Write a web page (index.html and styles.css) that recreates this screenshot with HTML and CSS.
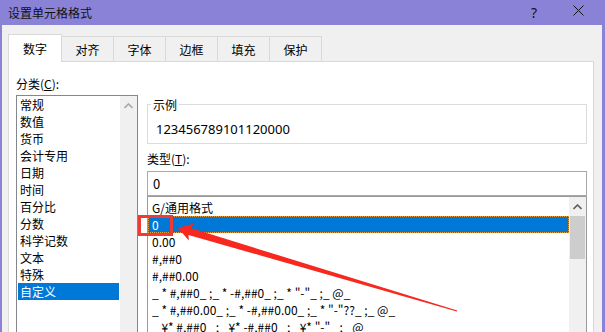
FILE: index.html
```html
<!DOCTYPE html>
<html lang="zh-CN">
<head>
    <meta charset="UTF-8">
    <title>设置单元格格式</title>
    <link rel="stylesheet" href="styles.css">
</head>
<body>
    <div class="dialog">
        <div class="titlebar">
            <span class="title">设置单元格格式</span>
            <span class="help">?</span>
            <span class="close">
                <svg width="11" height="11" viewBox="0 0 11 11"><path d="M0.5 0.5 L10.5 10.5 M10.5 0.5 L0.5 10.5" stroke="#111" stroke-width="1" fill="none"/></svg>
            </span>
        </div>
        <div class="content">
            <div class="tabs">
                <div class="tab active">数字</div>
                <div class="tab">对齐</div>
                <div class="tab">字体</div>
                <div class="tab">边框</div>
                <div class="tab">填充</div>
                <div class="tab">保护</div>
            </div>
            <div class="panel">
                <div class="col_left">
                    <div class="label">分类(<u>C</u>):</div>
                    <div class="listbox cat_list">
                        <ul class="items">
                            <li>常规</li>
                            <li>数值</li>
                            <li>货币</li>
                            <li>会计专用</li>
                            <li>日期</li>
                            <li>时间</li>
                            <li>百分比</li>
                            <li>分数</li>
                            <li>科学记数</li>
                            <li>文本</li>
                            <li>特殊</li>
                            <li class="selected">自定义</li>
                        </ul>
                        <div class="scrollbar">
                            <div class="scroll_btn">
                                <svg width="9" height="6" viewBox="0 0 9 6"><polyline points="0.5,5 4.5,1 8.5,5" stroke="#a8a8a8" stroke-width="1.6" fill="none"/></svg>
                            </div>
                        </div>
                    </div>
                </div>
                <div class="col_right">
                    <fieldset class="sample">
                        <legend>示例</legend>
                        <div class="sample_value">123456789101120000</div>
                    </fieldset>
                    <div class="label type_label">类型(<u>T</u>):</div>
                    <div class="type_input">0</div>
                    <div class="listbox fmt_list">
                        <ul class="items">
                            <li>G/通用格式</li>
                            <li class="selected focus">0</li>
                            <li>0.00</li>
                            <li>#,##0</li>
                            <li>#,##0.00</li>
                            <li>_ * #,##0_ ;_ * -#,##0_ ;_ * "-"_ ;_ @_</li>
                            <li>_ * #,##0.00_ ;_ * -#,##0.00_ ;_ * "-"??_ ;_ @_</li>
                            <li>_ ¥* #,##0_ ;_ ¥* -#,##0_ ;_ ¥* "-"_ ;_ @_</li>
                        </ul>
                        <div class="scrollbar">
                            <div class="scroll_btn">
                                <svg width="9" height="6" viewBox="0 0 9 6"><polyline points="0.5,5 4.5,1 8.5,5" stroke="#606060" stroke-width="1.6" fill="none"/></svg>
                            </div>
                            <div class="thumb"></div>
                        </div>
                    </div>
                </div>
            </div>
        </div>
    </div>
    <svg class="annotation" width="605" height="332" viewBox="0 0 605 332">
        <rect x="139.5" y="216.5" width="32" height="18" fill="none" stroke="#ef3b36" stroke-width="3"/>
        <polygon points="178,228 194,223.4 190.5,228.1 457.2,310.4 456.8,311.6 188.5,234.9 188.8,240.6" fill="#f7281e"/>
    </svg>
</body>
</html>
```

FILE: styles.css
```css
* {
    box-sizing: border-box;
}
body {
    margin: 0;
    width: 605px;
    height: 332px;
    overflow: hidden;
    position: relative;
    font-family: "Noto Sans CJK SC", "Noto Sans", sans-serif;
    font-size: 12px;
    color: #000;
}
.dialog {
    width: 605px;
    height: 332px;
    display: flex;
    flex-direction: column;
    background-color: #f0f0f0;
    border-left: 2px solid #8982d7;
    border-right: 3px solid #8982d7;
    overflow: hidden;
}

.titlebar {
    height: 25px;
    flex: none;
    display: flex;
    align-items: center;
    padding-left: 6px;
    padding-right: 11px;
    background-color: #8982d7;
    color: #111;
}
.title {
    flex: 1;
    line-height: 25px;
}
.help {
    width: 20px;
    text-align: center;
    font-family: "Noto Sans", sans-serif;
    font-size: 14px;
    margin-right: 22px;
}
.close {
    width: 25px;
    height: 11px;
    display: flex;
    justify-content: center;
    margin-top: -4px;
}

.content {
    flex: 1;
    display: flex;
    flex-direction: column;
    padding: 9px 8px 0 6px;
}
.tabs {
    display: flex;
    align-items: flex-end;
    height: 28px;
    margin-bottom: -1px;
    position: relative;
    z-index: 1;
}
.tab {
    width: 53px;
    height: 25px;
    margin-left: -1px;
    margin-bottom: 1px;
    border: 1px solid #d9d9d9;
    border-bottom: none;
    background-color: #f0f0f0;
    display: flex;
    align-items: center;
    justify-content: center;
    padding-top: 1px;
}
.tab.active {
    width: 54px;
    height: 28px;
    margin: 0;
    background-color: #fff;
    padding-top: 0;
}

.panel {
    flex: 1;
    display: flex;
    gap: 9px;
    padding: 13px 6px 0 7px;
    background-color: #fff;
    border: 1px solid #d9d9d9;
}
.label {
    line-height: 17px;
}
.col_left {
    width: 122px;
}
.col_right {
    flex: 1;
    display: flex;
    flex-direction: column;
}

.listbox {
    display: flex;
    height: 300px;
    border: 1px solid #828790;
    background-color: #fff;
}
.cat_list {
    margin-top: 3px;
}
.items {
    flex: 1;
    list-style: none;
    margin: 0;
    padding: 0;
}
.items li {
    height: 17px;
    line-height: 17px;
    white-space: pre;
    overflow: hidden;
}
.cat_list .items li {
    margin: 0 1px;
    padding-left: 2px;
}
.fmt_list .items {
    padding-top: 2px;
}
.fmt_list .items li {
    padding-left: 4px;
}
.items li.selected {
    background-color: #0078d7;
    color: #fff;
}
.items li.focus {
    outline: 1px dotted #e8a040;
    outline-offset: -1px;
}

.scrollbar {
    width: 17px;
    background-color: #f0f0f0;
    display: flex;
    flex-direction: column;
    align-items: center;
}
.scroll_btn {
    width: 17px;
    height: 19px;
    display: flex;
    align-items: center;
    justify-content: center;
}
.cat_list .scroll_btn {
    height: 20px;
}
.thumb {
    width: 15px;
    height: 43px;
    background-color: #cdcdcd;
}

.sample {
    margin: 21px 0 0 0;
    padding: 8px 0 5px 8px;
    border: 1px solid #dcdcdc;
    min-width: 0;
}
.sample legend {
    margin-left: -5px;
    padding: 0 2px;
    line-height: 17px;
}
.sample_value {
    font-family: "Noto Sans", sans-serif;
    font-size: 13px;
    line-height: 17px;
}
.type_label {
    margin-top: 6px;
}
.type_input {
    margin-top: 4px;
    height: 25px;
    border: 1px solid #a8a8a8;
    padding-left: 5px;
    line-height: 23px;
    font-size: 13px;
}
.fmt_list {
    border-color: #9a9a9a;
}

.annotation {
    position: absolute;
    left: 0;
    top: 0;
    pointer-events: none;
}
```
